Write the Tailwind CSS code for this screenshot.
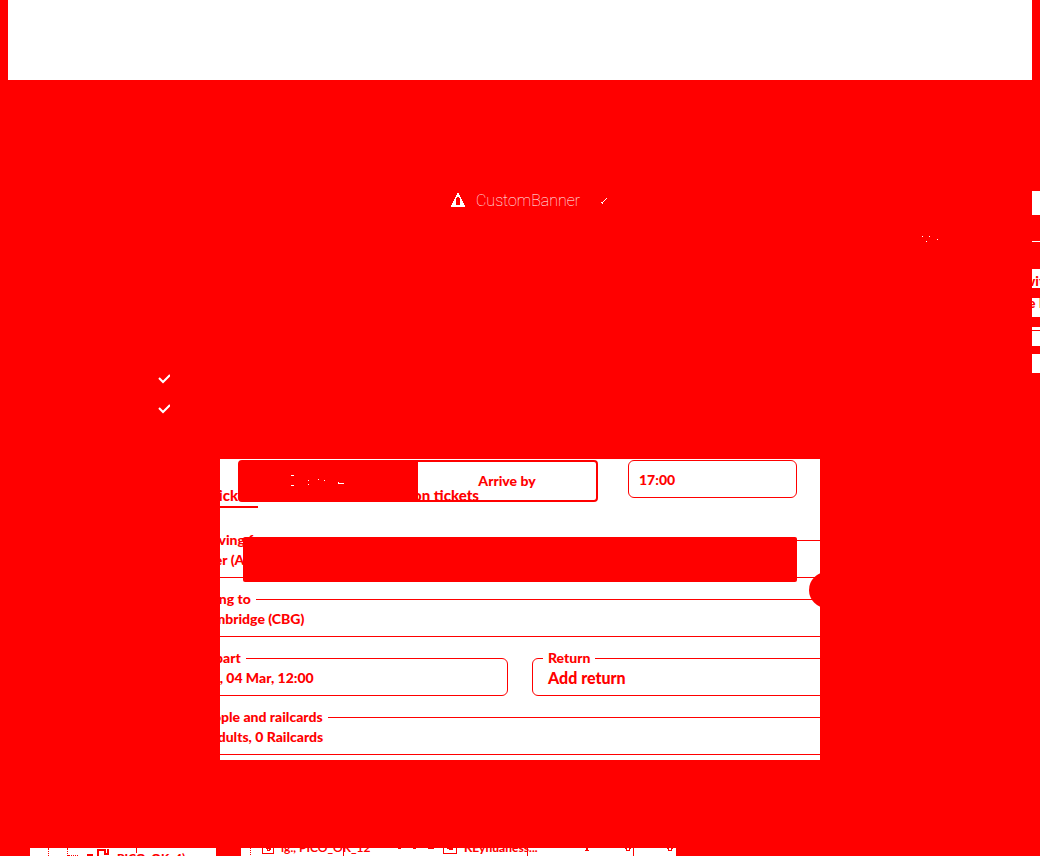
<!DOCTYPE html>
<html lang="en">
<head>
<meta charset="utf-8">
<meta name="viewport" content="width=device-width, initial-scale=1">
<title>Journey search</title>
<script src="https://cdn.jsdelivr.net/npm/@tailwindcss/browser@4"></script>
</head>
<body class="min-h-screen bg-[#ff0000] flex flex-col overflow-hidden text-[#ff0000] text-sm font-black font-[Lato,sans-serif]">
<header class="h-20 mx-2 bg-white shrink-0"></header>
<main class="flex flex-col">
  <section class="flex h-[379px]">
    <div class="flex-1 flex flex-col pt-[109px]">
      <div class="flex items-center h-6 pl-[450px] text-white">
        <svg class="w-4 h-4 shrink-0" viewBox="0 0 16 16" fill="currentColor" shape-rendering="crispEdges"><path fill-rule="evenodd" d="M7 0h2v2h1v2h1v2h1v2h1v2h1v2h1v2H1v-2h1v-2h1V8h1V6h1V4h1V2h1zM7 4v1H6v7h4V5H9V4z"/></svg>
        <h1 class="ml-[10px] text-base leading-6 font-thin font-['Roboto',sans-serif] w-[112px] whitespace-nowrap">CustomBanner</h1>
        <svg class="ml-3 w-2 h-4 shrink-0" viewBox="0 0 8 16" fill="none" stroke="currentColor" shape-rendering="crispEdges"><path d="M1 9h1v1h1M3 9L7 5"/></svg>
      </div>
      <svg class="w-5 h-2 ml-[920px] mt-[23px] shrink-0" viewBox="0 0 20 8" fill="white" shape-rendering="crispEdges"><path d="M2 0h1v1H2zM9 0h1v1H9zM6 5h1v1H6zM17 3h1v1h-1z"/></svg>
      <ul class="ml-[158px] mt-[129px] flex flex-col gap-[18px]">
        <li><svg class="w-3 h-3" viewBox="0 0 12 12" fill="none" stroke="white" stroke-width="2"><path d="M1 5l4 4 7-7"/></svg></li>
        <li><svg class="w-3 h-3" viewBox="0 0 12 12" fill="none" stroke="white" stroke-width="2"><path d="M1 5l4 4 7-7"/></svg></li>
      </ul>
    </div>
    <aside class="w-2 overflow-hidden flex flex-col pt-[111px] text-sm whitespace-nowrap">
      <div class="h-6 bg-white shrink-0"></div>
      <div class="h-px bg-white mt-[26px] shrink-0"></div>
      <div class="h-[19px] leading-6 bg-white mt-[27px] shrink-0 overflow-hidden -indent-2">with</div>
      <div class="h-[19px] leading-[10px] bg-white mt-[10px] shrink-0 overflow-hidden -indent-1">e I</div>
      <div class="h-[19px] bg-white mt-[10px] shrink-0 pt-[3px]"><div class="h-px bg-[#ff0000]"></div></div>
      <div class="h-[19px] bg-white mt-2 shrink-0"></div>
    </aside>
  </section>

  <section class="relative w-[600px] h-[301px] mx-auto bg-white">
    <form class="-mx-[39px] pt-6 flex flex-col">
      <nav class="flex w-[298px] h-[25px] justify-end gap-[121px] leading-6 text-[15px]">
        <a href="#" class="border-b-2 border-[#ff0000]">Tickets</a>
        <a href="#" class="whitespace-nowrap w-[100px] text-right">Season tickets</a>
      </nav>
      <div class="pt-[22px] flex flex-col gap-[11px]">
        <fieldset class="h-12 border border-[#ff0000] rounded px-[10px] min-w-0"><legend class="px-[5px] leading-5">Leaving from</legend><input aria-label="Leaving from" value="Aber (ABE)" class="block px-[5px] w-full leading-5 outline-0"></fieldset>
        <fieldset class="h-12 border border-[#ff0000] rounded px-[10px] min-w-0"><legend class="px-[5px] leading-5">Going to</legend><input aria-label="Going to" value="Cambridge (CBG)" class="block px-[5px] w-full leading-5 outline-0"></fieldset>
        <div class="grid grid-cols-2 gap-6">
          <fieldset class="h-12 border border-[#ff0000] rounded-md px-[10px] min-w-0"><legend class="px-[5px] leading-5">Depart</legend><button type="button" class="block px-[5px] leading-5">Tue, 04 Mar, 12:00</button></fieldset>
          <fieldset class="h-12 border border-[#ff0000] rounded-md px-[10px] min-w-0"><legend class="px-[5px] leading-5">Return</legend><button type="button" class="block px-[5px] leading-5 text-base">Add return</button></fieldset>
        </div>
        <fieldset class="h-12 border border-[#ff0000] rounded px-[10px] min-w-0"><legend class="px-[5px] leading-5">People and railcards</legend><button type="button" class="block px-[5px] leading-5">2 Adults, 0 Railcards</button></fieldset>
      </div>
    </form>
    <div class="absolute left-[18px] top-px w-[360px] h-[42px] flex border-2 border-[#ff0000] rounded">
      <button type="button" class="w-1/2 bg-[#ff0000]" aria-label="Depart at"><svg class="ml-[50px] w-16 h-4" viewBox="0 0 64 16" fill="white" shape-rendering="crispEdges"><path d="M1 2h3v1H1zM1 12h3v1H1zM18 7h1v1h-1zM18 11h1v1h-1zM28 6h1v1h-1zM34 7h1v1h-1zM48 9h1v1h5v1h-6z"/></svg></button>
      <button type="button" class="w-1/2">Arrive by</button>
    </div>
    <input aria-label="Time" value="17:00" class="absolute left-[408px] top-px w-[169px] h-[38px] px-[10px] border border-[#ff0000] rounded-md">
    <button type="button" aria-label="Done" class="absolute left-[23px] top-[78px] w-[554px] h-[45px] bg-[#ff0000] rounded-[2px]"></button>
    <button type="button" aria-label="Swap stations" class="absolute left-[589px] top-[113px] w-9 h-9 rounded-full bg-[#ff0000]"></button>
  </section>
</main>
<footer class="mt-[88px] h-2 pl-[30px] flex gap-[25px] overflow-hidden text-xs font-bold shrink-0">
  <div class="w-[186px] bg-white flex overflow-hidden whitespace-nowrap"><i class="ml-[18px] h-2 border-l border-dotted"></i><i class="ml-[18px] h-2 border-l border-dotted"></i><i class="mt-[7px] w-[10px] border-t border-dotted"></i><svg class="ml-[9px] w-6 h-2 shrink-0" viewBox="0 0 24 8" fill="none" stroke="currentColor" stroke-width="2" shape-rendering="crispEdges"><path d="M0 7h6M11 8V2h7v4M21 1v5h-4"/></svg><span class="ml-[6px] mt-1 leading-3 font-black w-[19px]">PICO_OK_4)</span><i class="h-[5px] border-l"></i></div>
  <div class="w-[435px] bg-white flex overflow-hidden whitespace-nowrap"><svg class="ml-[7px] mr-[3px] w-[26px] h-2 shrink-0" viewBox="0 0 26 8" fill="none" stroke="currentColor" shape-rendering="crispEdges"><path d="M2.500 0v8" stroke-dasharray="1 1"/><path d="M14.500 0v5.500h13M25.500 0v5M18 0h4v1h-1v1h-2v-1"/></svg><span class="ml-[4px] -mt-[6px] leading-3 w-[62px]">ig., PICO_OK_12</span><i class="h-2 border-l"></i><svg class="ml-[52px] w-10 h-2 shrink-0" viewBox="0 0 40 8" fill="currentColor" shape-rendering="crispEdges"><path d="M2 0h3v1H2zM17 0h3v1h-3zM32 0h6v1h-6z"/></svg><svg class="ml-[7px] w-[15px] h-2 shrink-0" viewBox="0 0 15 8" fill="none" stroke="currentColor" shape-rendering="crispEdges"><path d="M.5 0v5.500h13V0M4 .5h5v1H6"/></svg><span class="ml-[6px] -mt-[6px] leading-3 w-[63px] font-black">KEynuaness...</span><i class="h-2 border-l"></i><svg class="w-[150px] h-2 shrink-0" viewBox="0 0 150 8" fill="currentColor" shape-rendering="crispEdges"><path d="M58 0h2v2h1v1h-4V2h1zM97 0h2v2h2V0h2v1h-1v2h-4V1h-1zM105 0h1v8h-1zM139 0h2v2h2V0h2v1h-1v2h-4V1h-1z"/></svg></div>
</footer>
</body>
</html>
